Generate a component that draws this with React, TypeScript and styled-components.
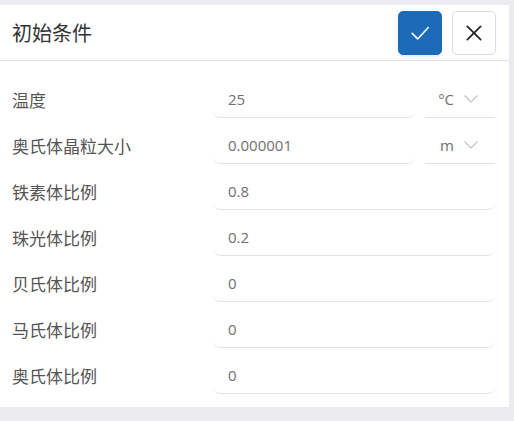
import React from 'react';
import styled, { createGlobalStyle } from 'styled-components';

const GlobalStyle = createGlobalStyle`
    html, body {
        margin: 0;
        padding: 0;
        background: #ebebf0;
    }
    body {
        padding-top: 5px;
        font-family: "Noto Sans CJK SC", "Noto Sans", sans-serif;
    }
`;

type Field = { label: string; value: string; unit?: string };

const fields: Field[] = [
    { label: '温度', value: '25', unit: '°C' },
    { label: '奥氏体晶粒大小', value: '0.000001', unit: 'm' },
    { label: '铁素体比例', value: '0.8' },
    { label: '珠光体比例', value: '0.2' },
    { label: '贝氏体比例', value: '0' },
    { label: '马氏体比例', value: '0' },
    { label: '奥氏体比例', value: '0' },
];

export default function App(): JSX.Element {
    return (
        <>
            <GlobalStyle />
            <Panel>
                <Header>
                    <Title>初始条件</Title>
                    <Actions>
                        <IconButton $primary aria-label="confirm">
                            <svg width="22" height="22" viewBox="0 0 24 24" fill="none" stroke="#fff" strokeWidth="1.8" strokeLinecap="round" strokeLinejoin="round">
                                <path d="M3.5 12.5 L9.5 18.5 L21 6" />
                            </svg>
                        </IconButton>
                        <IconButton aria-label="close">
                            <svg width="20" height="20" viewBox="0 0 24 24" fill="none" stroke="#222" strokeWidth="2" strokeLinecap="round">
                                <path d="M4 4 L20 20 M20 4 L4 20" />
                            </svg>
                        </IconButton>
                    </Actions>
                </Header>
                <Body>
                    {fields.map((f) => (
                        <Row key={f.label}>
                            <Label>{f.label}</Label>
                            <Controls>
                                <ValueBox>{f.value}</ValueBox>
                                {f.unit && (
                                    <UnitSelect>
                                        <span>{f.unit}</span>
                                        <svg width="14" height="8" viewBox="0 0 14 8" fill="none" stroke="#c0c0c0" strokeWidth="1.1">
                                            <path d="M0.5 0.5 L7 7 L13.5 0.5" />
                                        </svg>
                                    </UnitSelect>
                                )}
                            </Controls>
                        </Row>
                    ))}
                </Body>
            </Panel>
        </>
    );
}

const Panel = styled.div`
    width: 509px;
    height: 402px;
    background: #fff;
    box-sizing: border-box;
`

const Header = styled.div`
    height: 56px;
    box-sizing: border-box;
    border-bottom: 1px solid #e3e3e6;
    display: flex;
    align-items: center;
    justify-content: space-between;
    padding: 0 13px 0 12px;
`

const Title = styled.h1`
    margin: 0;
    font-size: 20px;
    font-weight: 400;
    color: #333;
`

const Actions = styled.div`
    display: flex;
    gap: 10px;
`

const IconButton = styled.button<{ $primary?: boolean }>`
    width: 44px;
    height: 44px;
    padding: 0;
    display: flex;
    align-items: center;
    justify-content: center;
    border-radius: 5px;
    cursor: pointer;
    background: ${p => (p.$primary ? '#1b6bb9' : '#fff')};
    border: 1px solid ${p => (p.$primary ? '#1b6bb9' : '#dcdcdc')};
    box-shadow: ${p => (p.$primary ? '0 2px 3px rgba(27,107,185,0.12)' : 'none')};
`

const Body = styled.div`
    padding: 20px 14px 0 12px;
    display: flex;
    flex-direction: column;
    gap: 9px;
`

const Row = styled.div`
    display: flex;
    align-items: center;
    height: 37px;
`

const Label = styled.div`
    width: 201px;
    flex-shrink: 0;
    font-size: 17px;
    color: #555;
`

const Controls = styled.div`
    flex: 1;
    display: flex;
    gap: 10px;
    height: 100%;
`

const ValueBox = styled.div`
    flex: 1;
    display: flex;
    align-items: center;
    padding-left: 15px;
    font-size: 15px;
    font-family: "Open Sans", "Noto Sans", sans-serif;
    color: #707070;
    border-bottom: 1px solid #e4e4e4;
    border-radius: 0 0 7px 7px;
`

const UnitSelect = styled.div`
    width: 70px;
    box-sizing: border-box;
    display: flex;
    align-items: center;
    justify-content: flex-end;
    gap: 10px;
    padding-right: 17px;
    font-size: 15px;
    font-family: "Open Sans", "Noto Sans", sans-serif;
    color: #707070;
    border-bottom: 1px solid #e4e4e4;
`
